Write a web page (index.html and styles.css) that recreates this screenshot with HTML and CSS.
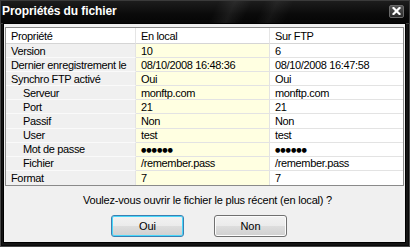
FILE: index.html
```html
<!DOCTYPE html>
<html lang="fr">
<head>
<meta charset="utf-8">
<title>Propriétés du fichier</title>
<link rel="stylesheet" href="styles.css">
</head>
<body>
<div class="window">
  <div class="titlebar">
    <span class="title">Propriétés du fichier</span>
    <button class="close" aria-label="Fermer">
      <svg width="9" height="8" viewBox="0 0 9 8"><path d="M1.5 1 L7.5 7 M7.5 1 L1.5 7" stroke="#fff" stroke-width="2.2" stroke-linecap="square"/></svg>
    </button>
  </div>
  <div class="client">
    <div class="grid">
      <div class="h">Propriété</div><div class="h">En local</div><div class="h last">Sur FTP</div>
      <div class="c k">Version</div><div class="c l">10</div><div class="c f">6</div>
      <div class="c k">Dernier enregistrement le</div><div class="c l">08/10/2008 16:48:36</div><div class="c f">08/10/2008 16:47:58</div>
      <div class="c k">Synchro FTP activé</div><div class="c l">Oui</div><div class="c f">Oui</div>
      <div class="c k sub">Serveur</div><div class="c l">monftp.com</div><div class="c f">monftp.com</div>
      <div class="c k sub">Port</div><div class="c l">21</div><div class="c f">21</div>
      <div class="c k sub">Passif</div><div class="c l">Non</div><div class="c f">Non</div>
      <div class="c k sub">User</div><div class="c l">test</div><div class="c f">test</div>
      <div class="c k sub">Mot de passe</div><div class="c l"><span class="dots">●●●●●●</span></div><div class="c f"><span class="dots">●●●●●●</span></div>
      <div class="c k sub">Fichier</div><div class="c l">/remember.pass</div><div class="c f">/remember.pass</div>
      <div class="c k end">Format</div><div class="c l end">7</div><div class="c f end">7</div>
    </div>
    <p class="msg">Voulez-vous ouvrir le fichier le plus récent (en local) ?</p>
    <div class="actions">
      <button class="btn default">Oui</button>
      <button class="btn">Non</button>
    </div>
  </div>
</div>
</body>
</html>
```
FILE: styles.css
```css
html, body {
  margin: 0;
  padding: 0;
  background: #000;
}
body {
  width: 410px;
  height: 247px;
  overflow: hidden;
  font-family: "Liberation Sans", Arial, sans-serif;
  font-size: 11px;
  color: #000;
}
.window {
  width: 410px;
  height: 247px;
  box-sizing: border-box;
  display: flex;
  flex-direction: column;
  padding: 0 5px 5px 4px;
  background: #141414;
  box-shadow: inset 0 0 0 1px #4a4a4a, inset 0 0 0 2px #0a0a0a;
}
.titlebar {
  height: 24px;
  flex: none;
  display: flex;
  align-items: center;
  justify-content: space-between;
  margin: 0 -5px 0 -4px;
  padding: 0 6px 0 2px;
  background:
    linear-gradient(115deg, transparent 52%, rgba(255,255,255,0.07) 56%, transparent 60%, transparent 63%, rgba(255,255,255,0.05) 66%, transparent 70%),
    linear-gradient(180deg, #1e1e1e 0%, #0a0a0a 60%, #050505 100%);
  box-shadow: inset 0 0 0 1px #3a3a3a;
}
.title {
  color: #fff;
  font-weight: bold;
  font-size: 12px;
  letter-spacing: -0.1px;
  padding-bottom: 2px;
}
.close {
  width: 15px;
  height: 13px;
  padding: 0;
  margin-bottom: 2px;
  border: 1px solid #6a6a6a;
  border-radius: 2px;
  background: linear-gradient(180deg, #555555, #2a2a2a);
  display: flex;
  align-items: center;
  justify-content: center;
}
.close svg { display: block; }
.client {
  flex: 1;
  background: #f0f0f0;
  display: flex;
  flex-direction: column;
  box-shadow: 0 0 0 1px #000;
}
.grid {
  margin: 3px 1px 0 1px;
  border: 1px solid #8a8a8a;
  display: grid;
  grid-template-columns: 130px 134px 1fr;
  grid-template-rows: 16px;
  grid-auto-rows: 14.1px;
  background: #fff;
}
.grid > div {
  box-sizing: border-box;
  display: flex;
  align-items: center;
  white-space: nowrap;
  overflow: hidden;
  padding-left: 5px;
  letter-spacing: -0.35px;
}
.h {
  background: #fff;
  border-bottom: 1px solid #d5d5d5;
  border-right: 1px solid #e5e5e5;
  padding-top: 1px;
}
.h.last { border-right: none; }
.c {
  border-bottom: 1px solid #e3e3e3;
  border-right: 1px solid #e3e3e3;
}
.c.k { background: #f0f0f0; border-bottom-color: #fafafa; }
.c.l { background: #ffffe1; }
.c.f { background: #fff; border-right: none; }
.c.end { border-bottom: none; }
.grid > .sub { padding-left: 17px; }
.dots {
  font-family: "DejaVu Sans", sans-serif;
  font-size: 6.2px;
  letter-spacing: -0.1px;
}
.msg {
  margin: 7px 0 0 0;
  text-align: center;
  line-height: 14px;
  letter-spacing: -0.2px;
  padding-left: 6px;
}
.actions {
  display: flex;
  justify-content: center;
  gap: 30px;
  margin-top: 8px;
  padding-right: 11px;
}
.btn {
  width: 73px;
  height: 22px;
  box-sizing: border-box;
  font-family: "Liberation Sans", Arial, sans-serif;
  font-size: 11px;
  color: #000;
  border: 1px solid #707070;
  border-radius: 3px;
  background: linear-gradient(180deg, #f2f2f2 0%, #ebebeb 48%, #dddddd 52%, #cfcfcf 100%);
  box-shadow: inset 0 0 0 1px #fcfcfc;
  padding: 0;
}
.btn.default {
  border-color: #3c7fb1;
  box-shadow: inset 0 0 0 1px #48d7fb;
}
```
